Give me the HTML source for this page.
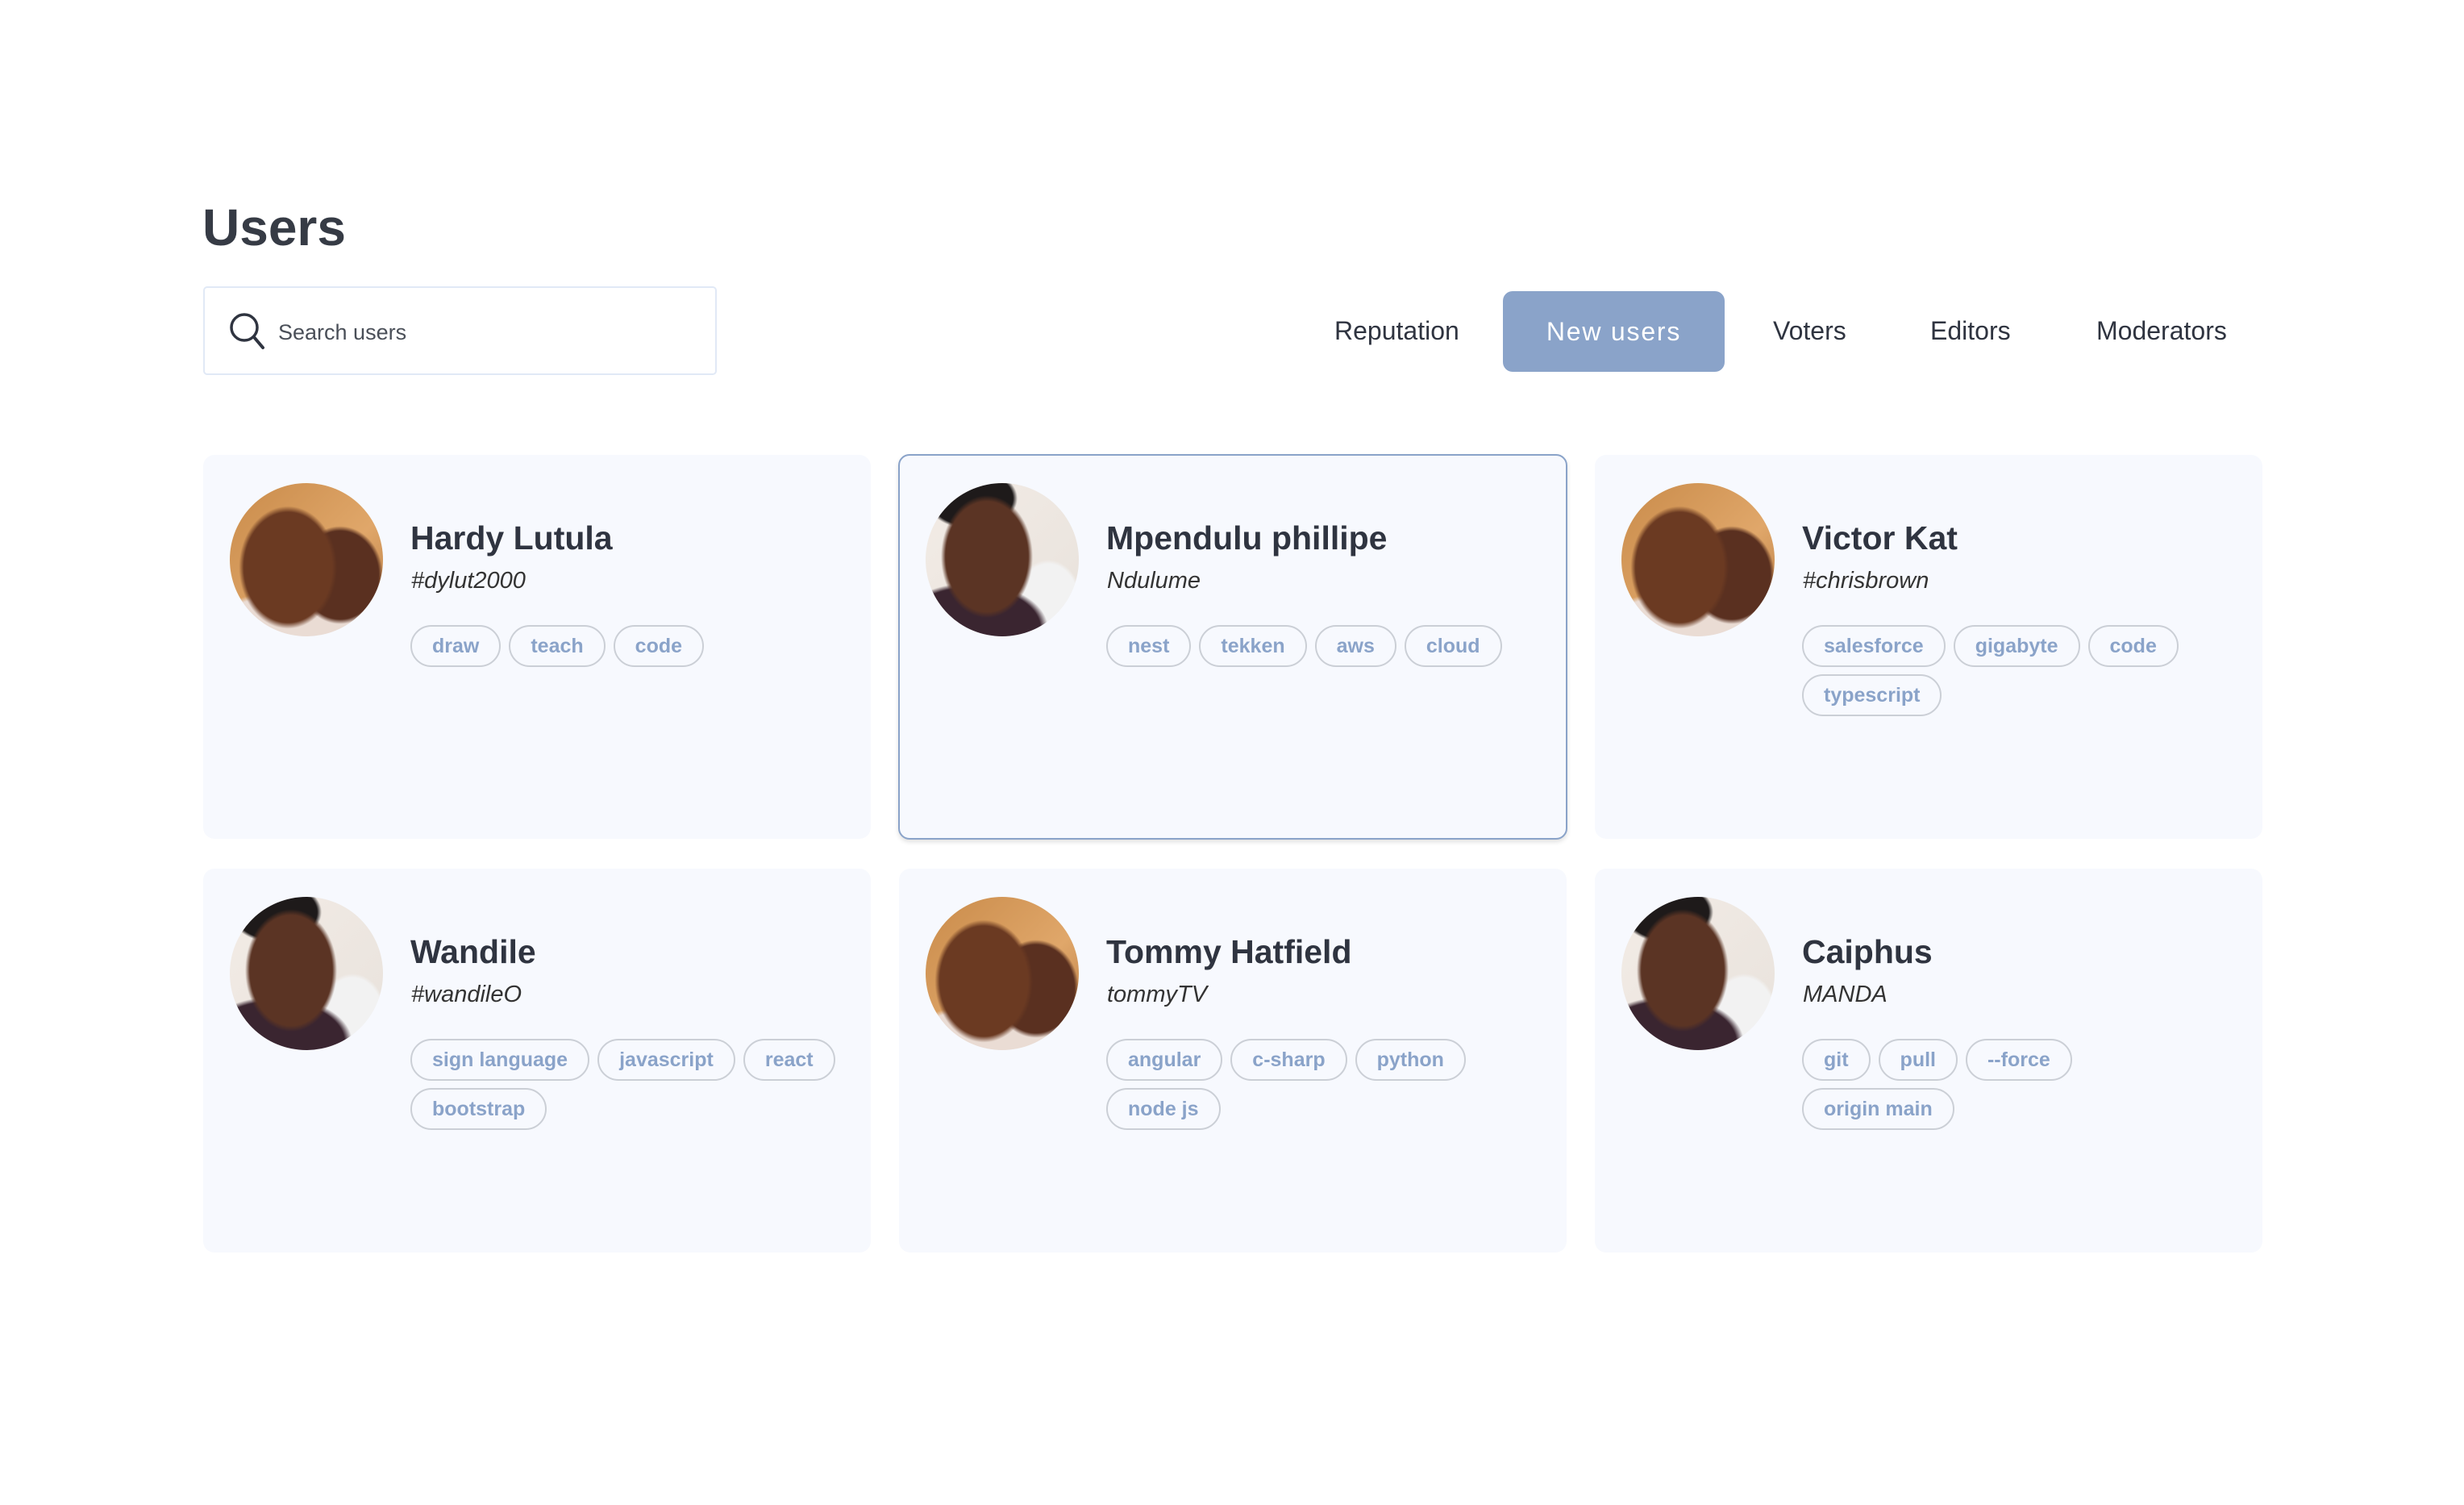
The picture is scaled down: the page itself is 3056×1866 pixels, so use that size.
<!DOCTYPE html>
<html><head><meta charset="utf-8"><style>
*{box-sizing:border-box;margin:0;padding:0}
html,body{width:3056px;height:1866px;background:#fff;font-family:"Liberation Sans",Arial,sans-serif;color:#2f3440;overflow:hidden;position:relative}
h1{position:absolute;left:251px;top:245px;font-size:64px;font-weight:700;color:#363b45}
.search{position:absolute;left:252px;top:355px;width:637px;height:110px;border:2px solid #e1e9f6;border-radius:5px}
.search svg{position:absolute;left:30px;top:30px}
.search span{position:absolute;left:91px;top:40px;font-size:27px;color:#4a4f58}
.tab{position:absolute;top:392px;font-size:32px;color:#2f3440}
.active{position:absolute;left:1864px;top:361px;width:275px;height:100px;background:#8aa3c9;border-radius:12px;color:#fff;font-size:32px;letter-spacing:1.8px;text-align:center;line-height:100px}
.card{position:absolute;width:828px;height:476px;background:#f7f9fe;border-radius:14px}
.card.sel{border:2px solid #8aa3c9;box-shadow:0 3px 6px rgba(0,0,0,.12)}
.av{position:absolute;left:33px;top:35px;width:190px;height:190px;border-radius:50%;overflow:hidden}
.a1{background:radial-gradient(ellipse 32% 40% at 38% 55%,#6b3a22 0,#6b3a22 90%,transparent 100%),radial-gradient(ellipse 28% 32% at 72% 60%,#5a3020 0,#5a3020 90%,transparent 100%),radial-gradient(ellipse 60% 30% at 40% 100%,#eadcd4 0,#eadcd4 90%,transparent 100%),linear-gradient(135deg,#c98b4a,#e0a76a 60%,#b5783f)}
.a2{background:radial-gradient(ellipse 30% 40% at 40% 48%,#5b3424 0,#5b3424 90%,transparent 100%),radial-gradient(ellipse 30% 20% at 30% 10%,#1e1a1a 0,#1e1a1a 90%,transparent 100%),radial-gradient(ellipse 50% 30% at 30% 95%,#3a2530 0,#3a2530 90%,transparent 100%),radial-gradient(ellipse 22% 28% at 80% 78%,#f2f2f2 0,#f2f2f2 90%,transparent 100%),linear-gradient(135deg,#f3ece6,#e8e2dc)}
.nm{position:absolute;left:257px;top:80px;font-size:41px;font-weight:700;color:#2f3440}
.hd{position:absolute;left:258px;top:140px;font-size:29px;font-style:italic;color:#333}
.tags{position:absolute;left:257px;top:211px;width:560px;display:flex;flex-wrap:wrap;gap:9px 10px}
.tags span{height:52px;line-height:48px;padding:0 25px;border:2px solid #cbcfd6;border-radius:26px;font-size:25px;font-weight:700;color:#8aa3c9}
</style></head><body>
<h1>Users</h1>
<div class="search"><svg width="46" height="48" viewBox="0 0 46 48"><circle cx="19" cy="19" r="16" fill="none" stroke="#2f3440" stroke-width="3.5"/><line x1="31" y1="31" x2="42" y2="44" stroke="#2f3440" stroke-width="4" stroke-linecap="round"/></svg><span>Search users</span></div>
<div class="tab" style="left:1655px">Reputation</div>
<div class="active">New users</div>
<div class="tab" style="left:2199px">Voters</div>
<div class="tab" style="left:2394px">Editors</div>
<div class="tab" style="left:2600px">Moderators</div>

<div class="card" style="left:252px;top:564px"><div class="av a1"></div><div class="nm">Hardy Lutula</div><div class="hd">#dylut2000</div><div class="tags"><span>draw</span><span>teach</span><span>code</span></div></div>
<div class="card sel" style="left:1114px;top:563px;width:830px;height:478px"><div class="av a2" style="left:32px;top:34px"></div><div class="nm" style="left:256px;top:79px">Mpendulu phillipe</div><div class="hd" style="left:257px;top:139px">Ndulume</div><div class="tags" style="left:256px;top:210px"><span>nest</span><span>tekken</span><span>aws</span><span>cloud</span></div></div>
<div class="card" style="left:1978px;top:564px"><div class="av a1"></div><div class="nm">Victor Kat</div><div class="hd">#chrisbrown</div><div class="tags"><span>salesforce</span><span>gigabyte</span><span>code</span><span>typescript</span></div></div>

<div class="card" style="left:252px;top:1077px"><div class="av a2"></div><div class="nm">Wandile</div><div class="hd">#wandileO</div><div class="tags" style="width:560px"><span>sign language</span><span>javascript</span><span>react</span><span>bootstrap</span></div></div>
<div class="card" style="left:1115px;top:1077px"><div class="av a1"></div><div class="nm">Tommy Hatfield</div><div class="hd">tommyTV</div><div class="tags"><span>angular</span><span>c-sharp</span><span>python</span><span>node js</span></div></div>
<div class="card" style="left:1978px;top:1077px"><div class="av a2"></div><div class="nm">Caiphus</div><div class="hd">MANDA</div><div class="tags" style="width:400px"><span>git</span><span>pull</span><span>--force</span><span>origin main</span></div></div>
</body></html>
